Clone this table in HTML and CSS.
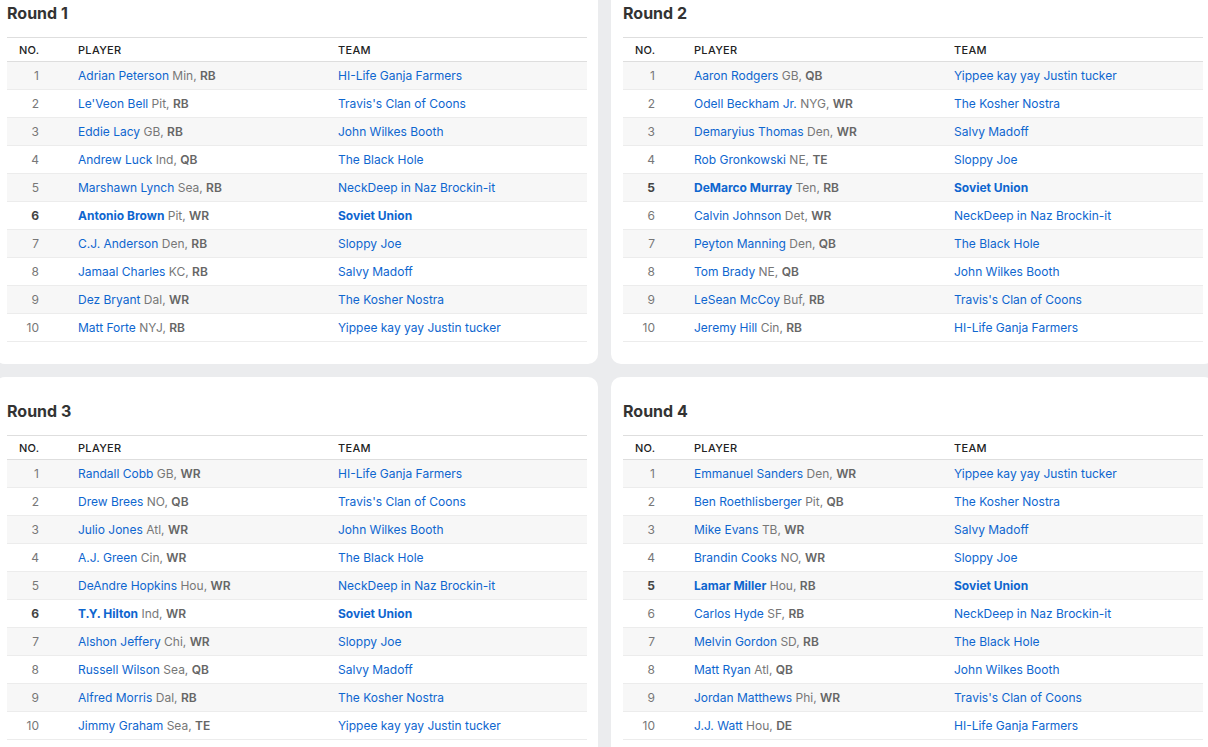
FILE: index.html
```html
<!DOCTYPE html>
<html>
<head>
<meta charset="utf-8">
<link rel="stylesheet" href="styles.css">
</head>
<body>
<div class="grid" id="grid"></div>
<script src="app.js"></script>
</body>
</html>
```

FILE: styles.css
```css
html, body {
  margin: 0;
  padding: 0;
  background: #ebecee;
  overflow: hidden;
}
body {
  font-family: Inter, "Noto Sans", sans-serif;
  color: #333;
}
.grid {
  display: grid;
  grid-template-columns: 603px 603px;
  gap: 13px;
  margin: -21px 0 0 -5px;
  width: 1219px;
}
.card {
  background: #fff;
  border-radius: 10px;
  padding: 0 11px 22px 12px;
  height: 385px;
  box-sizing: border-box;
}
.title {
  margin: 0;
  height: 58px;
  display: flex;
  align-items: center;
  padding-top: 9px;
  box-sizing: border-box;
  font-size: 16px;
  font-weight: 700;
  color: #333;
}
.tbl {
  width: 580px;
  border-collapse: collapse;
  table-layout: fixed;
  font-size: 12px;
}
.tbl th {
  font-size: 11px;
  font-weight: 500;
  letter-spacing: 0.3px;
  text-align: left;
  color: #222;
  height: 23px;
  padding: 0 12px;
  border-top: 1px solid #dedede;
  border-bottom: 1px solid #dedede;
}
.tbl td {
  height: 27px;
  padding: 0 12px;
  border-bottom: 1px solid #ececec;
  white-space: nowrap;
}
.tbl tr.odd td {
  background: #f7f7f7;
}
.tbl .c-no {
  width: 59px;
  text-align: right;
  padding-right: 27px;
  box-sizing: border-box;
}
.tbl td.c-no {
  color: #777;
}
.tbl .c-pl {
  width: 260px;
  box-sizing: border-box;
}
.link {
  color: #0e66cf;
}
.meta {
  color: #777;
}
.pos {
  color: #666;
  font-weight: 600;
}
.tbl tr.me td.c-no {
  color: #444;
  font-weight: 700;
}
.tbl tr.me .link {
  font-weight: 700;
}
```

FILE: app.js
```js
var rounds = [
  {n:1, mine:6, rows:[
    ["Adrian Peterson","Min","RB","HI-Life Ganja Farmers"],
    ["Le'Veon Bell","Pit","RB","Travis's Clan of Coons"],
    ["Eddie Lacy","GB","RB","John Wilkes Booth"],
    ["Andrew Luck","Ind","QB","The Black Hole"],
    ["Marshawn Lynch","Sea","RB","NeckDeep in Naz Brockin-it"],
    ["Antonio Brown","Pit","WR","Soviet Union"],
    ["C.J. Anderson","Den","RB","Sloppy Joe"],
    ["Jamaal Charles","KC","RB","Salvy Madoff"],
    ["Dez Bryant","Dal","WR","The Kosher Nostra"],
    ["Matt Forte","NYJ","RB","Yippee kay yay Justin tucker"]]},
  {n:2, mine:5, rows:[
    ["Aaron Rodgers","GB","QB","Yippee kay yay Justin tucker"],
    ["Odell Beckham Jr.","NYG","WR","The Kosher Nostra"],
    ["Demaryius Thomas","Den","WR","Salvy Madoff"],
    ["Rob Gronkowski","NE","TE","Sloppy Joe"],
    ["DeMarco Murray","Ten","RB","Soviet Union"],
    ["Calvin Johnson","Det","WR","NeckDeep in Naz Brockin-it"],
    ["Peyton Manning","Den","QB","The Black Hole"],
    ["Tom Brady","NE","QB","John Wilkes Booth"],
    ["LeSean McCoy","Buf","RB","Travis's Clan of Coons"],
    ["Jeremy Hill","Cin","RB","HI-Life Ganja Farmers"]]},
  {n:3, mine:6, rows:[
    ["Randall Cobb","GB","WR","HI-Life Ganja Farmers"],
    ["Drew Brees","NO","QB","Travis's Clan of Coons"],
    ["Julio Jones","Atl","WR","John Wilkes Booth"],
    ["A.J. Green","Cin","WR","The Black Hole"],
    ["DeAndre Hopkins","Hou","WR","NeckDeep in Naz Brockin-it"],
    ["T.Y. Hilton","Ind","WR","Soviet Union"],
    ["Alshon Jeffery","Chi","WR","Sloppy Joe"],
    ["Russell Wilson","Sea","QB","Salvy Madoff"],
    ["Alfred Morris","Dal","RB","The Kosher Nostra"],
    ["Jimmy Graham","Sea","TE","Yippee kay yay Justin tucker"]]},
  {n:4, mine:5, rows:[
    ["Emmanuel Sanders","Den","WR","Yippee kay yay Justin tucker"],
    ["Ben Roethlisberger","Pit","QB","The Kosher Nostra"],
    ["Mike Evans","TB","WR","Salvy Madoff"],
    ["Brandin Cooks","NO","WR","Sloppy Joe"],
    ["Lamar Miller","Hou","RB","Soviet Union"],
    ["Carlos Hyde","SF","RB","NeckDeep in Naz Brockin-it"],
    ["Melvin Gordon","SD","RB","The Black Hole"],
    ["Matt Ryan","Atl","QB","John Wilkes Booth"],
    ["Jordan Matthews","Phi","WR","Travis's Clan of Coons"],
    ["J.J. Watt","Hou","DE","HI-Life Ganja Farmers"]]}
];
var html = "";
rounds.forEach(function(r){
  html += '<section class="card"><h2 class="title">Round ' + r.n + '</h2>';
  html += '<table class="tbl"><thead><tr><th class="c-no">NO.</th><th class="c-pl">PLAYER</th><th>TEAM</th></tr></thead><tbody>';
  r.rows.forEach(function(p, i){
    var cls = (i % 2 === 0 ? "odd" : "even") + (i + 1 === r.mine ? " me" : "");
    html += '<tr class="' + cls + '"><td class="c-no">' + (i + 1) + '</td>' +
      '<td class="c-pl"><span class="link">' + p[0] + '</span> <span class="meta">' + p[1] + ', </span><span class="pos">' + p[2] + '</span></td>' +
      '<td><span class="link">' + p[3] + '</span></td></tr>';
  });
  html += '</tbody></table></section>';
});
document.getElementById("grid").innerHTML = html;
```
